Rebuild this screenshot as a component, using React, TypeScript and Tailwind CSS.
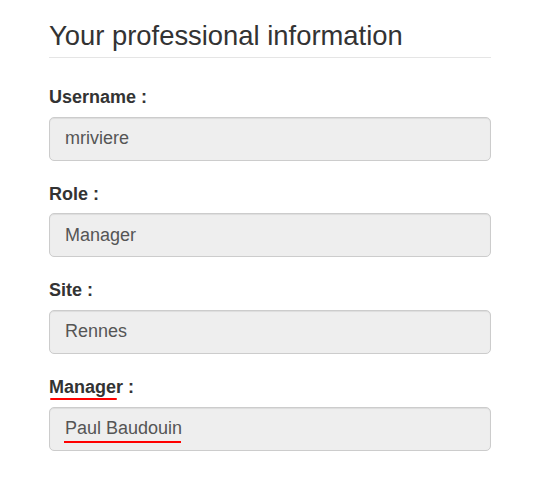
import React from "react";

const fields = [
  { label: "Username", value: "mriviere" },
  { label: "Role", value: "Manager" },
  { label: "Site", value: "Rennes" },
  { label: "Manager", value: "Paul Baudouin", marked: true },
];

export default function App() {
  return (
    <div className="min-h-[484px] w-[538px] bg-white font-['Liberation_Sans',Arial,sans-serif] text-[#333]">
      <div className="ml-[49px] w-[442px] pt-[18px]">
        <div className="mb-[26px] border-b border-[#e5e5e5] pb-[4px] text-[27.4px] leading-[35px] text-[#333]">
          Your professional information
        </div>
        {fields.map((f, i) => (
          <div key={i} className="mb-[20px]">
            <div className="mb-[6.67px] text-[18px] font-bold leading-[26px]">
              {f.marked ? (
                <span className="relative">
                  Manager
                  <span className="absolute left-[1px] top-[21px] h-[2px] w-[67px] rounded-full bg-[#ff0000]" />
                </span>
              ) : (
                f.label
              )}{" "}
              :
            </div>
            <div className="flex h-[44px] items-center rounded-[5px] border border-[#ccc] bg-[#eee] px-[15px] text-[18px] text-[#555] shadow-[inset_0_1px_1px_rgba(0,0,0,0.075)]">
              {f.marked ? (
                <span className="relative">
                  {f.value}
                  <span className="absolute left-[-1px] top-[26px] h-[2px] w-[117px] bg-[#ff0000]" />
                </span>
              ) : (
                f.value
              )}
            </div>
          </div>
        ))}
      </div>
    </div>
  );
}
